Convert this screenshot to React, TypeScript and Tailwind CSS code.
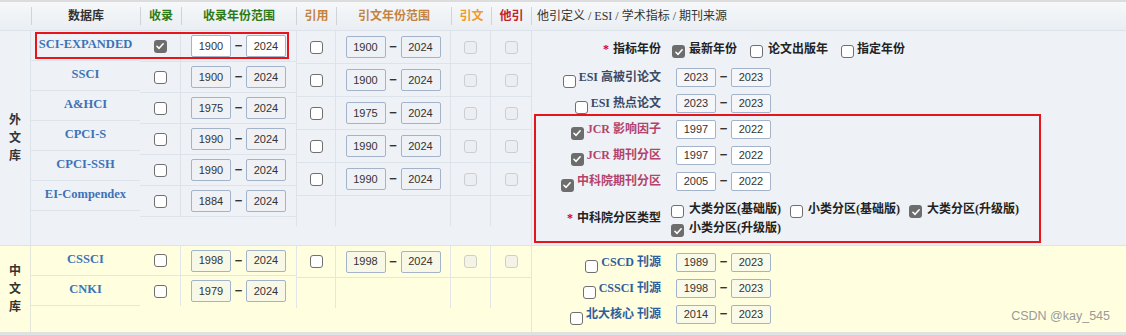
import clsx from 'clsx';

const FONT = "font-['Liberation_Serif','Noto_Sans_CJK_SC',serif]";

type Tone = 'on' | 'off' | 'dim' | 'dimYellow';

function Box({ tone, className }: { tone: Tone; className?: string }) {
    if (tone === 'on') {
        return (
            <span className={clsx('inline-flex h-[13px] w-[13px] shrink-0 items-center justify-center rounded-[3px] bg-[#6d6d6d]', className)}>
                <svg viewBox="0 0 12 12" className="h-[10px] w-[10px]">
                    <path d="M2.3 6.3 L4.9 8.8 L9.8 3.3" fill="none" stroke="#fff" strokeWidth="1.9" strokeLinecap="round" strokeLinejoin="round" />
                </svg>
            </span>
        );
    }
    return (
        <span
            className={clsx(
                'inline-block h-[13px] w-[13px] shrink-0 rounded-[3px] border',
                tone === 'off' && 'border-[#6f6f6f] bg-white',
                tone === 'dim' && 'border-[#cbcfd4] bg-[#eceef1]',
                tone === 'dimYellow' && 'border-[#cfcfc6] bg-[#f4f4e6]',
                className
            )}
        />
    );
}

function Year({ v, bg, small }: { v: string; bg: string; small?: boolean }) {
    return (
        <span
            className={clsx(
                "inline-flex w-[40px] items-center justify-center rounded-[2px] border border-[#a3b4ca] font-['Liberation_Sans',sans-serif] text-[11px] font-normal text-[#333]",
                small ? 'h-[19px]' : 'h-[22px]',
                bg
            )}
        >
            {v}
        </span>
    );
}

function Range({ a, b, bg, small }: { a: string; b: string; bg: string; small?: boolean }) {
    return (
        <div className="flex items-center">
            <Year v={a} bg={bg} small={small} />
            <span className="w-[15px] text-center font-['Liberation_Sans',sans-serif] text-[13px] font-bold text-[#333]">−</span>
            <Year v={b} bg={bg} small={small} />
        </div>
    );
}

const foreign = [
    { name: 'SCI-EXPANDED', on: true, from: '1900' },
    { name: 'SSCI', on: false, from: '1900' },
    { name: 'A&HCI', on: false, from: '1975' },
    { name: 'CPCI-S', on: false, from: '1990' },
    { name: 'CPCI-SSH', on: false, from: '1990' },
    { name: 'EI-Compendex', on: false, from: '1884' },
];

const cited = ['1900', '1900', '1975', '1990', '1990'];

const headers = [
    { label: '数据库', w: 'w-[109px]', color: 'text-[#333]' },
    { label: '收录', w: 'w-[41px]', color: 'text-[#2b7a17]' },
    { label: '收录年份范围', w: 'w-[115px]', color: 'text-[#2b7a17]' },
    { label: '引用', w: 'w-[40px]', color: 'text-[#c4833e]' },
    { label: '引文年份范围', w: 'w-[115px]', color: 'text-[#c4833e]' },
    { label: '引文', w: 'w-[40px]', color: 'text-[#f09a2c]' },
    { label: '他引', w: 'w-[40px]', color: 'text-[#c3222b]' },
];

const options = [
    { label: '大类分区(基础版)', on: false },
    { label: '小类分区(基础版)', on: false },
    { label: '大类分区(升级版)', on: true },
    { label: '小类分区(升级版)', on: true },
];

function SideLabel({ children, tone, color }: { children: React.ReactNode; tone: Tone; color: string }) {
    return (
        <div className={clsx('flex w-[129px] items-center justify-end', color)}>
            <Box tone={tone} className="relative top-[4px] mr-[3px]" />
            <span>{children}</span>
        </div>
    );
}

export default function App() {
    return (
        <div className={clsx('relative h-[335px] w-[1126px] overflow-hidden bg-white text-[12px]', FONT)}>
            {/* header */}
            <div className="flex h-[31px] border-t-2 border-b border-t-[#dcdcdc] border-b-[#dde3ea] bg-gradient-to-b from-[#f6f8fa] to-[#eaeef2] font-bold">
                <div className="w-[31px] shrink-0" />
                {headers.map((h) => (
                    <div key={h.label} className={clsx('flex shrink-0 items-center', h.w)}>
                        <span className="h-[18px] w-px bg-[#cdd4dc]" />
                        <span className={clsx('flex-1 text-center', h.color)}>{h.label}</span>
                    </div>
                ))}
                <div className="flex flex-1 items-center">
                    <span className="h-[18px] w-px bg-[#cdd4dc]" />
                    <span className="pl-[5px] font-normal text-[#333]">他引定义 / ESI / 学术指标 / 期刊来源</span>
                </div>
            </div>

            {/* 外文库 */}
            <div className="flex h-[214px] bg-[#eef2f6]">
                <div className="flex w-[31px] shrink-0 items-center justify-center border-r border-[#dde3ea]">
                    <div className="flex flex-col items-center font-bold leading-[18px] text-[#333]">
                        <span>外</span>
                        <span>文</span>
                        <span>库</span>
                    </div>
                </div>
                <div className="w-[109px] shrink-0">
                    {foreign.map((r) => (
                        <div key={r.name} className="flex h-[30px] items-center justify-center border-b border-[#dde3ea] pb-[3px] text-[12.5px] font-semibold text-[#3d72b6]">
                            {r.name}
                        </div>
                    ))}
                </div>
                <div className="w-[156px] shrink-0">
                    {foreign.map((r, i) => (
                        <div key={r.name} className="flex h-[31px] border-b border-[#dde3ea]">
                            <div className="flex w-[41px] items-center justify-center border-r border-[#dde3ea]">
                                <Box tone={r.on ? 'on' : 'off'} />
                            </div>
                            <div className="flex flex-1 items-center justify-center">
                                <Range a={r.from} b="2024" bg={i === 0 ? 'bg-white' : 'bg-[#eff1f4]'} />
                            </div>
                        </div>
                    ))}
                </div>
                <div className="w-[235px] shrink-0">
                    {cited.map((y, i) => (
                        <div key={i} className="flex h-[33px] border-b border-[#dde3ea]">
                            <div className="flex w-[40px] items-center justify-center border-x border-[#dde3ea]">
                                <Box tone="off" />
                            </div>
                            <div className="flex w-[115px] items-center justify-center border-r border-[#dde3ea]">
                                <Range a={y} b="2024" bg="bg-[#eef1f5]" />
                            </div>
                            <div className="flex w-[40px] items-center justify-center border-r border-[#dde3ea]">
                                <Box tone="dim" />
                            </div>
                            <div className="flex w-[40px] items-center justify-center">
                                <Box tone="dim" />
                            </div>
                        </div>
                    ))}
                    <div className="flex h-[30px]">
                        <div className="w-[40px] border-x border-[#dde3ea]" />
                        <div className="w-[115px] border-r border-[#dde3ea]" />
                        <div className="w-[40px] border-r border-[#dde3ea]" />
                    </div>
                </div>

                <div className="flex-1 border-l border-[#dde3ea] pt-[2px] font-bold text-[#222]">
                    <div className="flex h-[31px] items-center">
                        <div className="w-[129px] text-right">
                            <span className="mr-[4px] text-[#d4001a]">*</span>指标年份
                        </div>
                        <div className="ml-[11px] flex items-center">
                            <Box tone="on" className="relative top-[3px]" />
                            <span className="ml-[4px]">最新年份</span>
                            <Box tone="off" className="relative top-[3px] ml-[13px]" />
                            <span className="ml-[5px]">论文出版年</span>
                            <Box tone="off" className="relative top-[3px] ml-[13px]" />
                            <span className="ml-[3px]">指定年份</span>
                        </div>
                    </div>
                    <div className="flex h-[26px] items-center">
                        <SideLabel tone="off" color="text-[#3b4a67]">ESI 高被引论文</SideLabel>
                        <div className="ml-[15px]">
                            <Range a="2023" b="2023" bg="bg-[#f4f6f9]" small />
                        </div>
                    </div>
                    <div className="flex h-[26px] items-center">
                        <SideLabel tone="off" color="text-[#3b4a67]">ESI 热点论文</SideLabel>
                        <div className="ml-[15px]">
                            <Range a="2023" b="2023" bg="bg-[#f4f6f9]" small />
                        </div>
                    </div>
                    <div className="flex h-[26px] items-center">
                        <SideLabel tone="on" color="text-[#b4426a]">JCR 影响因子</SideLabel>
                        <div className="ml-[15px]">
                            <Range a="1997" b="2022" bg="bg-white" small />
                        </div>
                    </div>
                    <div className="flex h-[26px] items-center">
                        <SideLabel tone="on" color="text-[#b4426a]">JCR 期刊分区</SideLabel>
                        <div className="ml-[15px]">
                            <Range a="1997" b="2022" bg="bg-white" small />
                        </div>
                    </div>
                    <div className="flex h-[26px] items-center">
                        <SideLabel tone="on" color="text-[#b4426a]">中科院期刊分区</SideLabel>
                        <div className="ml-[15px]">
                            <Range a="2005" b="2022" bg="bg-white" small />
                        </div>
                    </div>
                    <div className="mt-[6px] flex items-center">
                        <div className="w-[129px] text-right">
                            <span className="mr-[4px] text-[#d4001a]">*</span>中科院分区类型
                        </div>
                        <div className="ml-[10px] flex w-[370px] flex-wrap gap-y-[2px]">
                            {options.map((o) => (
                                <div key={o.label} className="flex h-[17px] w-[119px] items-center">
                                    <Box tone={o.on ? 'on' : 'off'} className="relative top-[3px]" />
                                    <span className="ml-[5px]">{o.label}</span>
                                </div>
                            ))}
                        </div>
                    </div>
                </div>
            </div>

            {/* 中文库 */}
            <div className="flex h-[87px] border-t border-[#dde3ea] bg-[#ffffe0]">
                <div className="flex w-[31px] shrink-0 items-center justify-center border-r border-[#e4e6dc]">
                    <div className="flex flex-col items-center font-bold leading-[18px] text-[#333]">
                        <span>中</span>
                        <span>文</span>
                        <span>库</span>
                    </div>
                </div>
                <div className="w-[109px] shrink-0">
                    {['CSSCI', 'CNKI'].map((n) => (
                        <div key={n} className="flex h-[30px] items-center justify-center border-b border-[#e1e6e6] pb-[3px] text-[12.5px] font-semibold text-[#3d72b6]">
                            {n}
                        </div>
                    ))}
                </div>
                <div className="w-[156px] shrink-0">
                    {[
                        { y: '1998', line: true },
                        { y: '1979', line: false },
                    ].map((r) => (
                        <div key={r.y} className={clsx('flex h-[30px]', r.line && 'border-b border-[#e1e6e6]')}>
                            <div className="flex w-[41px] items-center justify-center border-r border-[#e1e6e6]">
                                <Box tone="off" />
                            </div>
                            <div className="flex flex-1 items-center justify-center">
                                <Range a={r.y} b="2024" bg="bg-[#f8f8e6]" />
                            </div>
                        </div>
                    ))}
                </div>
                <div className="w-[235px] shrink-0">
                    <div className="flex h-[32px] border-b border-[#e1e6e6]">
                        <div className="flex w-[40px] items-center justify-center border-x border-[#e1e6e6]">
                            <Box tone="off" />
                        </div>
                        <div className="flex w-[115px] items-center justify-center border-r border-[#e1e6e6]">
                            <Range a="1998" b="2024" bg="bg-[#f8f8e6]" />
                        </div>
                        <div className="flex w-[40px] items-center justify-center border-r border-[#e1e6e6]">
                            <Box tone="dimYellow" />
                        </div>
                        <div className="flex w-[40px] items-center justify-center">
                            <Box tone="dimYellow" />
                        </div>
                    </div>
                    <div className="flex h-[30px]">
                        <div className="w-[40px] border-x border-[#e1e6e6]" />
                        <div className="w-[115px] border-r border-[#e1e6e6]" />
                        <div className="w-[40px] border-r border-[#e1e6e6]" />
                    </div>
                </div>
                <div className="flex-1 border-l border-[#e1e6e6] pt-[3px] font-bold">
                    {[
                        { label: 'CSCD 刊源', a: '1989' },
                        { label: 'CSSCI 刊源', a: '1998' },
                        { label: '北大核心 刊源', a: '2014' },
                    ].map((r) => (
                        <div key={r.label} className="flex h-[26px] items-center">
                            <SideLabel tone="off" color="text-[#2e5e9e]">{r.label}</SideLabel>
                            <div className="ml-[15px]">
                                <Range a={r.a} b="2023" bg="bg-[#fafae8]" small />
                            </div>
                        </div>
                    ))}
                </div>
            </div>
            <div className="h-[3px] bg-[#e1e1e1]" />

            {/* annotations */}
            <div className="pointer-events-none absolute left-[35px] top-[32px] h-[27px] w-[254px] border-2 border-[#e8141c]" />
            <div className="pointer-events-none absolute left-[534px] top-[114px] h-[129px] w-[507px] border-2 border-[#e8141c]" />
            <div className="absolute bottom-[9px] right-[16px] font-['Liberation_Sans',sans-serif] text-[12.5px] text-[#9a9a9a]">CSDN @kay_545</div>
        </div>
    );
}
